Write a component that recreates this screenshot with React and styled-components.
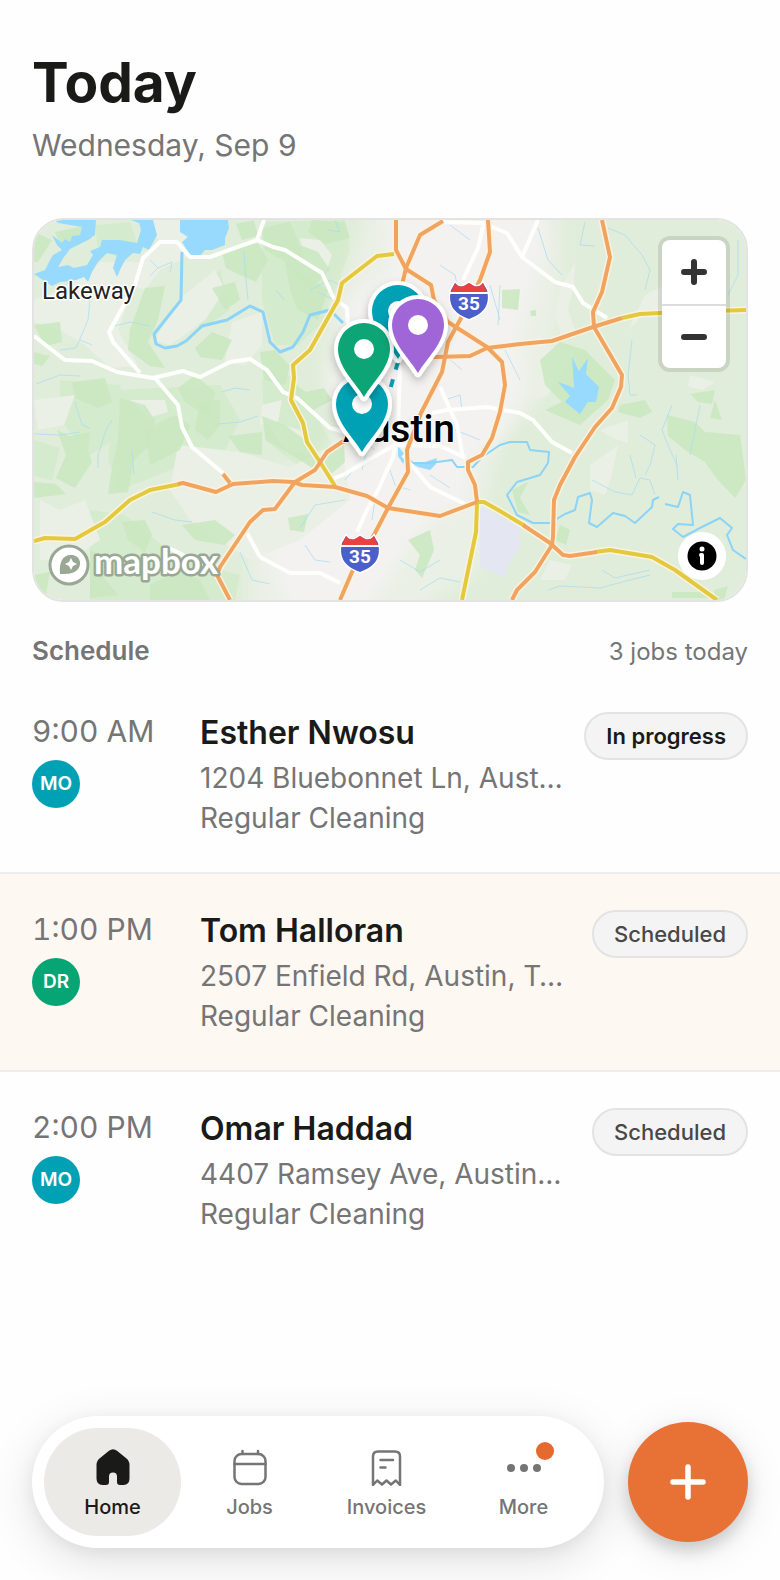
import styled, { createGlobalStyle } from 'styled-components';

const GlobalStyle = createGlobalStyle`
  * { box-sizing: border-box; }
  body {
    margin: 0;
    background: #fefefe;
    font-family: Inter, 'Liberation Sans', sans-serif;
    color: #1a1a19;
  }
  h1, h2, p, ul { margin: 0; padding: 0; }
  button { font: inherit; border: 0; padding: 0; cursor: pointer; }
`

const Page = styled.div`
  display: flex;
  flex-direction: column;
  min-height: 100vh;
`
const Header = styled.header`
  display: flex;
  flex-direction: column;
  gap: 13px;
  padding: 50px 32px 55px;
`
const Title = styled.h1`
  font-size: 55px;
  line-height: 64px;
  font-weight: 700;
`
const DateText = styled.p`
  font-size: 30px;
  line-height: 36px;
  color: #757575;
`

const MapCard = styled.section`
  position: relative;
  margin: 0 32px;
  height: 384px;
  border: 2px solid #e2e3e2;
  border-radius: 32px;
  overflow: hidden;
`
const MapSvg = styled.svg`
  display: block;
  width: 100%;
  height: 100%;
`
const ZoomGroup = styled.div`
  position: absolute;
  top: 20px;
  right: 20px;
  width: 64px;
  border-radius: 8px;
  background: #fff;
  box-shadow: 0 0 0 4px rgba(0, 0, 0, 0.1);
`
const ZoomButton = styled.button`
  display: grid;
  place-items: center;
  width: 64px;
  height: 64px;
  background: none;

  & + & { border-top: 2px solid #ddd; }
`
const InfoButton = styled.button`
  position: absolute;
  right: 20px;
  bottom: 20px;
  display: grid;
  place-items: center;
  width: 48px;
  height: 48px;
  border-radius: 24px;
  background: #fff;
`

const ScheduleHead = styled.div`
  display: flex;
  justify-content: space-between;
  align-items: baseline;
  padding: 33px 32px 8px;
  color: #757575;
`
const ScheduleTitle = styled.h2`
  font-size: 26px;
  line-height: 32px;
  font-weight: 600;
`
const JobCount = styled.p`
  font-size: 24px;
  line-height: 32px;
`
const JobList = styled.ul`
  list-style: none;
`
const JobRow = styled.li`
  display: flex;
  align-items: flex-start;
  padding: 36px 32px 34px;
  background: ${props => props.$active ? '#fef8f2' : 'none'};
  border-bottom: 2px solid ${props => props.$last ? 'transparent' : '#ededeb'};
`
const TimeCol = styled.div`
  display: flex;
  flex-direction: column;
  gap: 10px;
  width: 168px;
  flex-shrink: 0;
  font-size: 30px;
  line-height: 38px;
  font-variant-numeric: tabular-nums;
  color: #757575;
`
const Avatar = styled.span`
  display: grid;
  place-items: center;
  width: 48px;
  height: 48px;
  border-radius: 24px;
  background: ${props => props.$color};
  color: #fff;
  font-size: 19px;
  line-height: 24px;
  font-weight: 600;
`
const JobInfo = styled.div`
  flex: 1;
  min-width: 0;
  margin-right: 18px;
`
const Customer = styled.p`
  margin-bottom: 4px;
  font-size: 32px;
  line-height: 42px;
  font-weight: 600;
`
const Detail = styled.p`
  overflow: hidden;
  white-space: nowrap;
  text-overflow: ellipsis;
  font-size: 28px;
  line-height: 40px;
  color: #757575;
`
const Badge = styled.span`
  padding: 0 20px;
  border: 2px solid #e3e3e3;
  border-radius: 24px;
  background: #f4f4f4;
  color: ${props => props.$strong ? '#1a1a19' : '#484847'};
  font-size: 22px;
  line-height: 44px;
  font-weight: ${props => props.$strong ? 600 : 500};
`

const Footer = styled.footer`
  display: flex;
  align-items: center;
  gap: 24px;
  margin-top: auto;
  padding: 32px;
`
const TabBar = styled.nav`
  display: flex;
  flex: 1;
  padding: 12px;
  border-radius: 66px;
  background: #fff;
  box-shadow: 0 12px 48px rgba(0, 0, 0, 0.12), 0 4px 16px rgba(0, 0, 0, 0.06);
`
const Tab = styled.a`
  position: relative;
  display: flex;
  flex: 1;
  flex-direction: column;
  align-items: center;
  justify-content: center;
  gap: 9px;
  height: 108px;
  border-radius: 54px;
  background: ${props => props.$active ? '#ebeae6' : 'none'};
  color: ${props => props.$active ? '#1a1a19' : '#757575'};
  font-size: 20px;
  line-height: 24px;
  font-weight: 500;
  text-decoration: none;
`
const IconBox = styled.span`
  position: relative;
  display: block;
  width: 40px;
  height: 40px;
`
const Dot = styled.span`
  position: absolute;
  top: -4px;
  right: -10px;
  width: 18px;
  height: 18px;
  border-radius: 9px;
  background: #e46a30;
`
const AddButton = styled.button`
  display: grid;
  place-items: center;
  width: 120px;
  height: 120px;
  border-radius: 60px;
  background: #e87136;
  box-shadow: 0 8px 16px rgba(0, 0, 0, 0.16), 0 8px 40px rgba(0, 0, 0, 0.1);
`

const TEAL = '#00a1b5'
const GREEN = '#07a574'

const jobs = [
  { time: '9:00 AM', who: 'MO', color: TEAL, name: 'Esther Nwosu', address: '1204 Bluebonnet Ln, Aust…', status: 'In progress' },
  { time: '1:00 PM', who: 'DR', color: GREEN, name: 'Tom Halloran', address: '2507 Enfield Rd, Austin, T…', status: 'Scheduled' },
  { time: '2:00 PM', who: 'MO', color: TEAL, name: 'Omar Haddad', address: '4407 Ramsey Ave, Austin…', status: 'Scheduled' },
]

const lightLand = [
  'M34 300L60 290 100 262 140 262 135 285 118 330 138 366 110 368 85 345 60 330 34 322Z',
  'M150 220H182L190 255 160 270 145 290 130 285 142 262 158 240Z',
  'M178 300L215 270 225 290 205 320 170 345 155 340Z',
  'M232 322L262 312 262 345 245 365 225 362Z',
  'M178 445L240 452 290 468 340 440 350 500 300 540 250 560 190 520 170 490Z',
  'M40 500L60 510 85 500 100 540 70 560 40 560Z',
  'M130 400L165 400 168 412 148 418Z',
  'M265 420L300 430 310 455 285 450Z',
  'M560 290L575 262 574 284 568 310 575 330 562 340 555 315Z',
  'M645 295L665 285 662 310 640 318 628 330Z',
  'M590 465L618 445 612 475 605 495 590 490Z',
  'M600 430L628 420 628 443 612 438Z',
  'M690 375L715 382 702 390 688 386Z',
  'M540 345L575 350 560 375 548 395 530 400Z',
  'M550 560L572 565 565 580 540 580Z',
  'M300 238L320 240 332 255 325 275 305 262Z',
  'M262 405L282 400 278 422 260 425Z',
  'M34 400L75 395 64 425 38 430Z',
  'M75 300L95 306 100 328 84 320Z',
]
const forest = [
  'M55 232L85 226 92 238 75 246 60 244Z',
  'M34 232L52 240 38 262 34 262Z',
  'M145 288L165 286 158 320 148 342 165 368 150 366 128 350 130 330Z',
  'M222 253L258 243 268 260 256 282 240 275 226 268Z',
  'M236 224L254 220 258 236 242 240Z',
  'M212 288L235 282 240 300 225 310Z',
  'M195 348L212 332 232 340 222 360 200 357Z',
  'M34 325L60 322 62 342 45 346Z',
  'M34 352L50 356 42 366 34 364Z',
  'M72 382L105 378 112 402 98 408 75 398Z',
  'M178 388L195 375 215 392 210 418 185 402Z',
  'M120 398L145 405 155 420 150 445 134 460 128 492 108 494 112 468 118 440Z',
  'M145 430L175 415 190 425 180 450 150 465Z',
  'M200 402L220 400 220 425 208 440 195 430Z',
  'M57 430L70 436 90 432 88 450 92 462 75 488 56 478 66 455Z',
  'M34 482L56 484 66 494 34 498Z',
  'M228 436L262 432 262 455 240 452Z',
  'M262 228L290 222 300 245 318 252 330 270 310 290 285 262 265 250Z',
  'M312 220L345 222 350 238 325 244 308 232Z',
  'M285 262L310 278 328 290 318 320 298 310 290 290Z',
  'M292 382L306 392 324 388 332 400 310 412 298 404Z',
  'M262 416L285 425 312 445 322 462 312 468 292 455 266 440Z',
  'M325 448L344 440 345 462 330 475 320 468Z',
  'M260 352L275 350 290 366 285 385 264 380Z',
  'M182 525L215 520 235 535 225 545 195 540Z',
  'M122 522L145 520 152 535 145 552 128 540Z',
  'M90 550L112 560 104 578 118 595 90 598Z',
  'M150 585L180 570 200 580 210 600 150 600Z',
  'M34 575L50 572 45 600 34 600Z',
  'M288 518L308 514 304 532 290 530Z',
  'M408 540L430 530 434 550 422 578 415 570 420 555Z',
  'M502 290L520 289 518 310 502 308Z',
  'M530 311L536 310 536 316 531 316Z',
  'M540 360L560 342 585 350 615 380 608 400 580 425 545 410 562 402 545 385Z',
  'M620 405L645 400 652 412 640 418 618 412Z',
  'M667 415L695 422 705 432 740 435 746 480 735 498 718 480 705 462 685 450 668 436Z',
  'M690 394L715 390 712 404 698 402Z',
  'M512 490L528 482 520 498 530 515 518 512Z',
  'M560 525L570 530 566 545 555 540Z',
  'M672 592L705 592 710 598 672 598Z',
  'M714 590L728 586 724 600 716 600Z',
  'M715 400L722 420 710 418Z',
]
const midLand = [
  'M95 225L130 222 138 245 120 258 98 250Z',
  'M190 290L220 270 230 310 200 330Z',
  'M60 380L120 385 130 430 90 455 60 420Z',
  'M262 222L345 220 350 250 338 285 320 325 298 345 275 345 262 300Z',
  'M115 390L220 385 240 420 225 450 170 470 120 490 108 460Z',
  'M34 440L60 448 52 480 34 476Z',
  'M210 500L245 505 240 530 215 520Z',
  'M130 545L165 550 160 580 125 575Z',
  'M90 510L125 515 180 560 240 575 235 600 90 600Z',
  'M380 540L410 530 415 575 390 598 365 590Z',
  'M262 380L292 375 330 440 345 475 310 475 265 440Z',
]

const streams = [
  'M150 260L158 268 172 262 170 272M158 268L150 276',
  'M244 250L246 280 248 300M276 290L284 300',
  'M90 300L88 320 76 348 60 350M80 340L92 345',
  'M36 384L60 375 80 376',
  'M115 326L130 322 150 326',
  'M75 402L82 425 90 428M106 430L98 455 98 468M106 430L112 420',
  'M34 434L60 435 80 432M132 450L134 475',
  'M222 392L235 388 250 390M218 424L240 422 258 416',
  'M152 512L175 520 192 522M240 552L252 580 270 584',
  'M310 290L330 280 340 285M318 292L345 305',
  'M335 220L340 232 328 230M348 376L360 392',
  'M440 265L455 275 460 300M500 285L498 325M450 225L470 240M445 355L462 370',
  'M538 228L548 260 562 275M585 222L580 245 595 246',
  'M608 228L625 235 642 255 650 270 645 290',
  'M738 240L738 275 728 295',
  'M632 340L628 375 630 395 637 395',
  'M640 435L655 445 650 465 645 475M630 455L636 478',
  'M672 405L662 430 668 445 678 468M678 480L676 455M700 405L690 455',
  'M592 480L615 492 632 495 640 478 650 480 655 495',
  'M548 590L560 586 600 588 630 580 650 575M602 570L615 578 650 570',
  'M300 528L315 505 345 500M305 545L315 560 330 562M362 470L368 445 375 450',
  'M345 480L355 468M390 470L395 485 410 490M400 560L420 572 440 560',
  'M420 590L440 578 460 582M490 285L500 320M445 400L460 395 462 410',
  'M505 350L520 380M455 430L480 440M375 500L372 520M430 475L450 488',
]

const whiteRoads = [
  'M34 336L65 360 92 361 117 372 153 378 183 371 200 377 230 362 250 359 267 370 283 392 297 398 330 428 345 432',
  'M140 373L113 342 109 332 135 285 143 258 160 242 177 242 190 257 210 257 257 240 264 220',
  'M257 240L273 247 285 250 322 273 333 297 347 308 348 325',
  'M155 378L178 405 182 427 192 447 223 473',
  'M483 226L478 248 463 280',
  'M440 222L482 223 507 233 522 257 555 282 573 287 583 303 607 318',
  'M538 220L522 257',
  'M432 413L447 410 487 407 520 413 533 420 552 442 572 453',
  'M400 365L398 432 393 457 378 490 366 512 357 532',
  'M403 455L430 487 467 505',
  'M440 387L457 425 463 458',
  'M260 557L290 573 320 573 340 583',
  'M247 533L260 557M167 547L193 560 215 575',
  'M330 480L345 474 363 463 395 445 440 446 466 458',
]
const yellowRoads = [
  'M34 541L45 538 75 539 105 522 130 500 150 490 180 484',
  'M394 254L377 256 342 283 338 300 310 350 293 365 294 378 291 400 303 423 307 442 320 462 335 486',
  'M477 503L476 532 462 600',
  'M622 318L640 314 680 312 746 310',
  'M477 502L484 502 500 511 525 526',
  'M595 552L610 550 652 557 675 570 717 600',
]
const orangeRoads = [
  'M396 220L396 250 406 269 431 285 434 300 448 322 487 347 502 362 505 385 500 412 492 438 482 455 468 462 468 470 475 485 477 502',
  'M443 221L420 235 406 268 402 285',
  'M488 220L490 252 480 280 460 320 448 342 442 372 421 413 407 450 408 472 388 508 375 533 352 572 340 600',
  'M400 357L437 357 470 356 487 348 520 344 552 341 593 327 622 318',
  'M602 220L610 257 602 292 593 312 594 327 622 375 621 387 612 408 595 427 575 457 560 485 554 500 553 537 552 545 535 572 517 590 512 600',
  'M523 525L550 543 563 555 570 556 597 552',
  'M178 484L183 483 216 492 233 484 273 481 293 482 302 485 335 487 367 496 388 508 440 516 477 502',
  'M223 474L230 483',
  'M230 600L217 575 220 567 250 522 263 510 275 509 295 482 315 470 327 452 342 442 362 436',
]

function Pin({ x, y, color }) {
  return (
    <g transform={`translate(${x} ${y})`} filter="url(#pinShadow)">
      <path
        d="M0 48C-9 33-26 18-26 0A26 26 0 0 1 26 0C26 18 9 33 0 48Z"
        fill={color}
        stroke="#fff"
        strokeWidth="8"
        strokeLinejoin="round"
        paintOrder="stroke"
      />
      <circle r="10" fill="#fff" />
    </g>
  )
}

function Shield({ x, y }) {
  return (
    <g transform={`translate(${x} ${y})`}>
      <path
        d="M-14-18Q-10-13-5-15L0-18 5-15Q10-13 14-18L18-11C21 2 17 12 0 18C-17 12-21 2-18-11Z"
        fill="#4a5fc9"
        stroke="#fff"
        strokeWidth="3"
        paintOrder="stroke"
      />
      <path d="M-14-18Q-10-13-5-15L0-18 5-15Q10-13 14-18L18-9H-18Z" fill="#ea4140" />
      <path d="M-19-8H19" stroke="#fff" strokeWidth="2" />
      <text y="9" textAnchor="middle" fontFamily="Roboto, sans-serif" fontSize="19" fontWeight="700" fill="#fff">35</text>
    </g>
  )
}

function AustinMap() {
  return (
    <MapSvg viewBox="34 220 712 380" preserveAspectRatio="xMidYMid slice" role="img" aria-label="Map of today's jobs in Austin">
      <defs>
        <filter id="pinShadow" x="-50%" y="-50%" width="200%" height="200%">
          <feDropShadow dx="0" dy="4" stdDeviation="4" floodOpacity="0.25" />
        </filter>
        <filter id="soft" x="-20%" y="-20%" width="140%" height="140%">
          <feGaussianBlur stdDeviation="8" />
        </filter>
      </defs>
      <rect x="34" y="220" width="712" height="380" fill="#e0edda" />
      {midLand.map(d => <path key={d} d={d} fill="#d5ebcd" />)}
      <path
        d="M370 200H560L560 290 540 400 500 440 485 500 480 570 400 620H250L250 470 320 465 340 420 320 380 335 300 350 270Z"
        fill="#ebf0e6"
        filter="url(#soft)"
      />
      <path
        d="M385 200H540L545 250 530 300 520 330 525 390 500 440 470 460 470 500 430 520 400 560 360 620H290L270 560 250 530 290 500 340 465 350 430 330 400 345 330 350 300 390 270Z"
        fill="#f3f2f0"
        filter="url(#soft)"
      />
      {lightLand.map(d => <path key={d} d={d} fill="#ebf0e6" />)}
      {forest.map(d => <path key={d} d={d} fill="#c9e7c0" fillOpacity="0.850" />)}
      <path d="M480 507L520 525 520 547 508 565 505 578 480 567Z" fill="#e4e7f1" />

      <g fill="none" stroke="#a5dcf2" strokeWidth="1" strokeOpacity="0.700">
        {streams.map(d => <path key={d} d={d} />)}
      </g>
      <g fill="#98dafd">
        <path d="M34 274L45 270 50 260 53 255 62 250 57 245 52 235 62 243 65 239 70 242 72 236 80 235 82 227 58 223 55 220H96L95 235 88 240 70 249 64 257 58 267 68 265 74 268 87 265 93 255 90 251 100 247 102 240 120 240 137 243 141 230 139 223 131 220H153L157 235 149 250 143 247 140 254 133 253 125 260 120 270 117 277 113 268 117 255 107 253 98 262 92 272 88 282 84 277 76 280 60 282 52 286 40 278Z" />
        <path d="M180 220H228L229 228 225 238 225 245 212 250 205 250 200 256 190 255 182 242 188 237 180 232Z" />
        <path d="M572 357L579 371 588 358 586 374 599 387 596 402 588 402 580 414 565 402 570 396 558 382 567 385 574 388Z" />
        <path d="M398 446L406 456 403 464 398 456ZM411 463L425 462 437 458 436 464 430 470 418 467Z" />
      </g>
      <g fill="none" stroke="#8bd3f7" strokeLinejoin="round">
        <path strokeWidth="3" d="M182 252L181 300 154 334 156 344 165 348 177 346 186 341 202 326 227 320 250 306 263 312 270 342 280 352 293 347 303 332 310 315 330 310 343 323" />
        <path strokeWidth="2" d="M407 458L413 463 430 463 452 460 457 467 473 467 482 457 500 445 510 442 527 442 530 450 549 452 548 463 540 475 517 482 507 495 517 515 533 523 550 523 565 514 575 510 578 497 590 493 592 500 589 523 597 527 613 513 625 516 635 523 652 507 653 500 659 497M665 504L678 507 683 492 690 495 693 525 678 524 673 529 683 537 700 528 720 518 732 528 727 535 733 550 746 559" />
      </g>

      <g fill="none" strokeLinejoin="round">
        <g stroke="#fefffd" strokeWidth="4">
          {whiteRoads.map(d => <path key={d} d={d} />)}
        </g>
        <g stroke="#fbf3e2" strokeWidth="7">
          {yellowRoads.concat(orangeRoads).map(d => <path key={d} d={d} />)}
        </g>
        <g stroke="#e3c93d" strokeWidth="4">
          {yellowRoads.map(d => <path key={d} d={d} />)}
        </g>
        <g stroke="#f1a45f" strokeWidth="4">
          {orangeRoads.map(d => <path key={d} d={d} />)}
        </g>
      </g>

      <g fontFamily="Roboto, sans-serif" stroke="#fff" strokeLinejoin="round" paintOrder="stroke">
        <text x="42" y="299" fontSize="24" fill="#222" strokeWidth="3">Lakeway</text>
        <text x="343" y="442" fontSize="39" fontWeight="500" fill="#000" strokeWidth="2">Austin</text>
      </g>
      <Shield x={469} y={301} />
      <Shield x={360} y={554} />

      <path d="M398 362L395 372 390 390 380 410 361 458" fill="none" stroke="#0a9caf" strokeWidth="4" strokeDasharray="8 10" />
      <Pin x={398} y={311} color={TEAL} />
      <Pin x={362} y={404} color={TEAL} />
      <Pin x={364} y={349} color={GREEN} />
      <Pin x={418} y={325} color="#a066d8" />

      <g>
        <circle cx="69" cy="565" r="19" fill="#fff" stroke="#9ba795" strokeWidth="3" />
        <path d="M60 574C59 563 62 555 71 555C81 555 83 566 76 571C72 574 66 574 60 574Z" fill="#9ba795" />
        <path d="M71 558L73 562 77 564 73 566 71 570 69 566 65 564 69 562Z" fill="#fff" />
        <text x="94" y="574" fontFamily="Lato, sans-serif" fontSize="35" fontWeight="700" fill="#fff" stroke="#9ba795" strokeWidth="5" strokeLinejoin="round" paintOrder="stroke">mapbox</text>
      </g>
    </MapSvg>
  )
}

function HomeIcon() {
  return (
    <svg width="40" height="40" viewBox="0 0 40 40" fill="currentColor" aria-hidden="true">
      <path d="M16 4.800Q20 1.800 24 4.800L33.500 12.500Q36.500 15 36.500 19V32.500Q36.500 39 30.500 39H27Q24 39 24 36V30.500A4 4 0 0 0 16 30.500V36Q16 39 13 39H9.500Q3.500 39 3.500 32.500V19Q3.500 15 6.500 12.500Z" />
    </svg>
  )
}

function JobsIcon() {
  return (
    <svg width="40" height="40" viewBox="0 0 40 40" fill="none" stroke="currentColor" strokeWidth="2.500" strokeLinecap="round" aria-hidden="true">
      <rect x="4.500" y="8" width="31" height="30" rx="7" />
      <path d="M4.500 18H35.500M12.500 5V8M28 5V8" />
    </svg>
  )
}

function InvoicesIcon() {
  return (
    <svg width="40" height="40" viewBox="0 0 40 40" fill="none" stroke="currentColor" strokeWidth="2.500" strokeLinecap="round" strokeLinejoin="round" aria-hidden="true">
      <path d="M6 39V10.500Q6 5.500 11 5.500H28Q33 5.500 33 10.500V39L28.800 34.500 24 38.500 19.500 34.500 15 38.500 10.200 34.500Z" />
      <path d="M13.500 14H26M13.500 21.500H18.500" />
    </svg>
  )
}

function MoreIcon() {
  return (
    <svg width="40" height="40" viewBox="0 0 40 40" fill="currentColor" aria-hidden="true">
      <circle cx="7" cy="22" r="4" />
      <circle cx="20" cy="22" r="4" />
      <circle cx="33" cy="22" r="4" />
    </svg>
  )
}

const tabs = [
  { label: 'Home', icon: HomeIcon, active: true },
  { label: 'Jobs', icon: JobsIcon },
  { label: 'Invoices', icon: InvoicesIcon },
  { label: 'More', icon: MoreIcon, dot: true },
]

function App() {
  return (
    <Page>
      <GlobalStyle />
      <Header>
        <Title>Today</Title>
        <DateText>Wednesday, Sep 9</DateText>
      </Header>
      <MapCard>
        <AustinMap />
        <ZoomGroup>
          <ZoomButton aria-label="Zoom in">
            <svg width="28" height="28" viewBox="0 0 28 28" stroke="#333" strokeWidth="6" strokeLinecap="round">
              <path d="M4 14H24M14 4V24" />
            </svg>
          </ZoomButton>
          <ZoomButton aria-label="Zoom out">
            <svg width="28" height="28" viewBox="0 0 28 28" stroke="#333" strokeWidth="6" strokeLinecap="round">
              <path d="M4 14H24" />
            </svg>
          </ZoomButton>
        </ZoomGroup>
        <InfoButton aria-label="Map attribution">
          <svg width="30" height="30" viewBox="0 0 30 30">
            <circle cx="15" cy="15" r="14.500" fill="#000" />
            <circle cx="15" cy="8" r="2.500" fill="#fff" />
            <path d="M14 14H15V22" fill="none" stroke="#fff" strokeWidth="4" strokeLinecap="round" strokeLinejoin="round" />
          </svg>
        </InfoButton>
      </MapCard>
      <main>
        <ScheduleHead>
          <ScheduleTitle>Schedule</ScheduleTitle>
          <JobCount>3 jobs today</JobCount>
        </ScheduleHead>
        <JobList>
          {jobs.map((job, i) => (
            <JobRow key={job.time} $active={i === 1} $last={i === jobs.length - 1}>
              <TimeCol>
                {job.time}
                <Avatar $color={job.color}>{job.who}</Avatar>
              </TimeCol>
              <JobInfo>
                <Customer>{job.name}</Customer>
                <Detail>{job.address}</Detail>
                <Detail>Regular Cleaning</Detail>
              </JobInfo>
              <Badge $strong={job.status === 'In progress'}>{job.status}</Badge>
            </JobRow>
          ))}
        </JobList>
      </main>
      <Footer>
        <TabBar>
          {tabs.map(tab => (
            <Tab key={tab.label} href="#" $active={tab.active}>
              <IconBox>
                <tab.icon />
                {tab.dot && <Dot />}
              </IconBox>
              {tab.label}
            </Tab>
          ))}
        </TabBar>
        <AddButton aria-label="Add job">
          <svg width="40" height="40" viewBox="0 0 40 40" stroke="#fff" strokeWidth="5.500" strokeLinecap="round">
            <path d="M5 20H35M20 5V35" />
          </svg>
        </AddButton>
      </Footer>
    </Page>
  )
}
export default App;
